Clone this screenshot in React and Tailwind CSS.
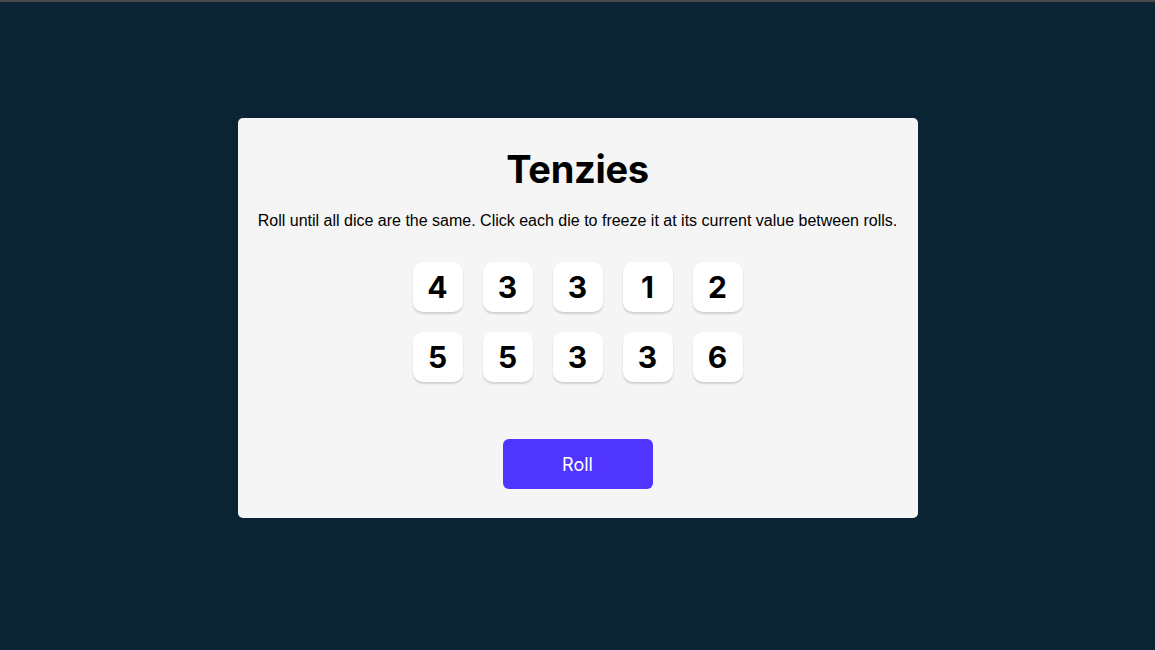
import React, { useState } from 'react';

const START = [4, 3, 3, 1, 2, 5, 5, 3, 3, 6];

function Die({ value, held, onClick }) {
  return (
    <button
      onClick={onClick}
      className={`w-[50px] h-[50px] rounded-[10px] flex items-center justify-center text-[30px] font-bold text-black shadow-[0_2px_2px_rgba(0,0,0,0.15)] ${held ? 'bg-[#59e391]' : 'bg-white'}`}
    >
      {value}
    </button>
  );
}

export default function App() {
  const [dice, setDice] = useState(START.map((v, i) => ({ id: i, value: v, held: false })));

  const roll = () =>
    setDice(d => d.map(x => (x.held ? x : { ...x, value: Math.ceil(Math.random() * 6) })));
  const hold = id => setDice(d => d.map(x => (x.id === id ? { ...x, held: !x.held } : x)));

  return (
    <div className="min-h-[650px] bg-[#0b2434] border-t-2 border-[#4a4a4a] flex justify-center pt-[116px] font-['Inter',sans-serif]">
      <main className="w-[680px] h-[400px] bg-[#f5f5f5] rounded-[5px] flex flex-col items-center pt-[28px]">
        <h1 className="text-[38px] leading-[46px] font-bold tracking-[-0.3px] text-black">Tenzies</h1>
        <p className="mt-[17px] text-base leading-6 text-black font-['Liberation_Sans',Arial,sans-serif]">
          Roll until all dice are the same. Click each die to freeze it at its current value between rolls.
        </p>
        <div className="mt-[29px] grid grid-cols-5 gap-5">
          {dice.map(d => (
            <Die key={d.id} value={d.value} held={d.held} onClick={() => hold(d.id)} />
          ))}
        </div>
        <button
          onClick={roll}
          className="mt-[57px] w-[150px] h-[50px] rounded-[6px] bg-[#5035ff] text-white text-[18px] font-normal"
        >
          Roll
        </button>
      </main>
    </div>
  );
}
